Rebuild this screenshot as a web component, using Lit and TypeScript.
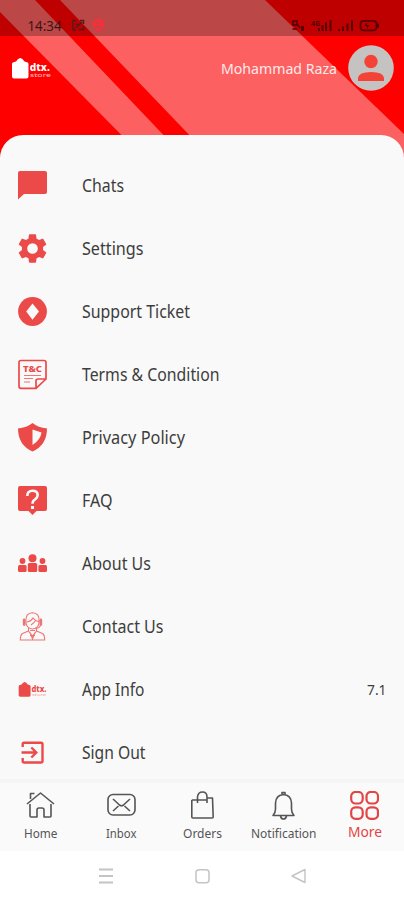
import { LitElement, html, css, svg } from "lit";
import { customElement, property } from "lit/decorators.js";

const bag = svg`<path d="M0 6Q0 4.500 1.500 4.200L4 3.500Q6 0 8.300 0Q10.500 0 12.500 3.500L15 4.200Q16.500 4.500 16.500 6V18.500Q16.500 20.500 14.500 20.500H2Q0 20.500 0 18.500Z"/>`;

const icons: Record<string, unknown> = {
  chat: svg`<path d="M2 0H27Q29 0 29 2V21Q29 23 27 23H6L0 28.5V2Q0 0 2 0Z"/>`,
  settings: svg`<g transform="translate(-3.2 -3.2) scale(1.475)"><path d="M19.14 12.94c.04-.3.06-.61.06-.94s-.02-.64-.07-.94l2.03-1.58a.49.49 0 0 0 .12-.61l-1.92-3.32a.49.49 0 0 0-.59-.22l-2.39.96a7 7 0 0 0-1.62-.94l-.36-2.54A.48.48 0 0 0 13.920 2.400h-3.840a.48.48 0 0 0-.48.41l-.36 2.540c-.59.24-1.130.570-1.620.940l-2.390-.960a.48.48 0 0 0-.59.220L2.740 8.870a.48.48 0 0 0 .12.610l2.030 1.580a6 6 0 0 0 0 1.880l-2.030 1.580a.49.49 0 0 0-.12.610l1.920 3.320c.12.220.370.290.590.220l2.390-.960c.5.380 1.030.700 1.620.940l.36 2.540c.05.240.240.410.480.410h3.840c.24 0 .440-.170.470-.410l.36-2.540c.59-.240 1.130-.560 1.620-.940l2.390.960c.22.080.470 0 .590-.220l1.920-3.320a.48.48 0 0 0-.12-.610ZM12 15.600a3.600 3.600 0 1 1 0-7.200 3.600 3.600 0 0 1 0 7.200Z"/></g>`,
  ticket: svg`<circle cx="14.500" cy="14.500" r="14.400"/><path fill="#f9f9f9" d="M14.500 6.500L21 14.500L14.500 22.800L8.200 14.500Z"/>`,
  terms: svg`<path fill="none" stroke="currentColor" stroke-width="1.700" d="M3 .5H26Q28 .5 28 2.500V19L18 28.300H3Q1 28.300 1 26.300V2.500Q1 .5 3 .5ZM18 28V21Q18 19 20 19H28"/><text x="5" y="12" font-size="9" font-weight="800" textLength="19" lengthAdjust="spacingAndGlyphs">T&amp;C</text><path fill="none" stroke="currentColor" stroke-width="1.200" opacity=".75" d="M6 15.500H23M6 18.500H15M6 22H12"/>`,
  privacy: svg`<path d="M14.500 0Q20 4.500 29 5.500Q29 22 14.500 28.500Q0 22 0 5.500Q9 4.500 14.500 0Z"/><path fill="#f9f9f9" d="M14.500 6.500L23.500 9.500Q22.500 17 14.500 22Z"/>`,
  faq: svg`<path d="M2 0H27Q29 0 29 2V23Q29 25 27 25H18.500L14.500 29L10.500 25H2Q0 25 0 23V2Q0 0 2 0Z"/><path fill="none" stroke="#f9f9f9" stroke-width="2.600" d="M9.300 10Q9.300 4.700 14.500 4.700Q19.700 4.700 19.700 9Q19.700 11.500 17 13.500Q14.500 15 14.500 17.700"/><path fill="#f9f9f9" d="M13 20H16V23H13Z"/>`,
  about: svg`<circle cx="14.500" cy="9.300" r="4"/><circle cx="4.500" cy="12" r="2.900"/><circle cx="24.500" cy="12" r="2.900"/><rect x="9.800" y="14" width="9.400" height="9" rx="1.500"/><rect x="0" y="16" width="8.600" height="7" rx="1.500"/><rect x="20.400" y="16" width="8.600" height="7" rx="1.500"/>`,
  contact: svg`<g fill="none" stroke="currentColor" stroke-width="1.100" opacity=".75"><path d="M8 9Q7.500 1 14.500 .7Q21.500 1 21 9V11Q20 16.500 14.500 17Q9 16.500 8 11ZM9 10Q13 9.500 15 6Q17 9 20.500 9.500M13 13Q16 11 18 8M10.500 16V19L14.500 24L18.500 19V16M10.500 19L4.500 21.500Q2.300 23 2.300 28H26.700Q26.700 23 24.500 21.500L18.500 19M12 20.500L14.500 27L17 20.500M12 23.500H17M12 18.500H17"/><path stroke-width="2.800" stroke-linecap="round" d="M6.200 8V12.500M22.800 8V12.500"/><path d="M22.500 13.500Q21 16.500 17 16.500"/></g>`,
  info: svg`<g transform="translate(.7 7) scale(.72)">${bag}</g><text x="13.500" y="16.600" font-size="8" font-weight="800" textLength="15" lengthAdjust="spacingAndGlyphs">dtx.</text><text x="14" y="20.800" font-size="3.500" opacity=".6" textLength="14" lengthAdjust="spacingAndGlyphs">store</text>`,
  exit: svg`<path fill="none" stroke="currentColor" stroke-width="2.400" d="M4.700 9V6Q4.700 4.700 6 4.700H23Q24.500 4.700 24.500 6V23Q24.500 24.500 23 24.500H6Q4.700 24.500 4.700 23V20M3.500 14.500H18M13.300 9.500L18.300 14.500L13.300 19.500"/>`,
};

const tabIcons: Record<string, unknown> = {
  home: svg`<path d="M1 13L14.500 2L28 13M4 13V25Q4 26 5 26H11V19Q11 17 13 17H16Q18 17 18 19V26H24Q25 26 25 25V13M4.500 8V2.500H8.500"/>`,
  inbox: svg`<rect x="1" y="3.500" width="27" height="20.500" rx="5"/><path d="M6 8L12.500 14Q14.500 15.500 16.500 14L23 8M6 20L11.500 15M23 20L17.500 15"/>`,
  orders: svg`<path d="M3.800 9V26Q3.800 27 5 27H24Q25.200 27 25.200 26L24.500 7H19M3.800 9H19M9.500 12V6Q10 1 14.500 1Q19 1 19 6V12"/>`,
  bell: svg`<path d="M4 24.500Q6.500 22 6.500 18V12Q7 4 14.500 3.500Q22 4 22.500 12V18Q22.500 22 25 24.500ZM13 3.500V1.500H16V3.500M11.500 25Q12 28 14.500 28Q17 28 17.500 25"/>`,
  more: svg`<g stroke-width="2.200"><rect x="1.200" y="1" width="11.500" height="11.500" rx="4.200"/><rect x="16.500" y="1" width="11.500" height="11.500" rx="4.200"/><rect x="1.200" y="16.300" width="11.500" height="11.500" rx="4.200"/><rect x="16.500" y="16.300" width="11.500" height="11.500" rx="4.200"/></g>`,
};

/** One line of text set to a fixed measure. */
@customElement("fit-text")
export class FitText extends LitElement {
  @property() text = "";
  @property({ type: Number }) measure = 0;
  @property({ type: Number }) size = 17;
  static styles = css`
    :host { display: block; }
    svg { display: block; overflow: visible; fill: currentColor; font-family: "Noto Sans", sans-serif; }
  `;
  render() {
    return html`<svg width=${this.measure} height="24"><text x="0" y="18" font-size=${this.size} textLength=${this.measure} lengthAdjust="spacingAndGlyphs">${this.text}</text></svg>`;
  }
}

const rows: [string, string, number][] = [
  ["chat", "Chats", 42],
  ["settings", "Settings", 61.5],
  ["ticket", "Support Ticket", 108],
  ["terms", "Terms & Condition", 137.5],
  ["privacy", "Privacy Policy", 103],
  ["faq", "FAQ", 30.5],
  ["about", "About Us", 69],
  ["contact", "Contact Us", 81.5],
  ["info", "App Info", 62.5],
  ["exit", "Sign Out", 63.5],
];

const tabs: [string, string, number][] = [
  ["home", "Home", 33.5],
  ["inbox", "Inbox", 30.5],
  ["orders", "Orders", 39],
  ["bell", "Notification", 65.5],
  ["more", "More", 34],
];

@customElement("app-root")
export class AppRoot extends LitElement {
  static styles = css`
    :host { display: block; width: 404px; height: 900px; overflow: hidden; background: #fff; font-family: "Noto Sans", sans-serif; }
    .screen { display: flex; flex-direction: column; height: 900px; position: relative; }
    .stripes { position: absolute; top: 0; left: 0; }
    .status { position: relative; height: 36px; background: rgba(0, 0, 0, 0.255); flex: none; }
    .status svg { display: block; font-family: "Noto Sans", sans-serif; }
    .header { position: relative; height: 99px; flex: none; display: flex; padding: 9px 10px 0 12px; box-sizing: border-box; align-items: flex-start; color: #fff; }
    .logo { margin-top: 12.5px; fill: #fff; font-family: "Noto Sans", sans-serif; }
    .name { margin: 11px 11px 0 auto; color: #ffe9e9; }
    .sheet { position: relative; flex: 1; min-height: 0; background: #f9f9f9; border-radius: 23px 23px 0 0; padding-top: 19px; box-sizing: border-box; }
    .row { height: 63px; display: flex; align-items: center; padding: 0 18px; color: #3d3d3d; }
    .icon { color: #eb4a49; fill: currentColor; width: 29px; height: 29px; margin-right: 35px; overflow: visible; font-family: "Noto Sans", sans-serif; }
    .version { margin-left: auto; margin-top: -1px; }
    .tabs { position: relative; height: 72px; flex: none; background: #fafafa; display: grid; grid-template-columns: repeat(5, 81px); box-sizing: border-box; border-top: 4px solid #f5f5f5; padding-top: 8px; }
    .tab { display: flex; flex-direction: column; align-items: center; color: #555; }
    .tab svg { fill: none; stroke: currentColor; stroke-width: 1.6; stroke-linejoin: round; }
    .active { color: #e34545; }
    .active fit-text { margin-top: -1px; }
    .system { position: relative; height: 49px; flex: none; background: #fff; }
    .system svg { display: block; fill: none; stroke: #c4c4c4; }
  `;
  render() {
    return html`<div class="screen">
      <svg class="stripes" width="404" height="165">
        <path fill="#f00" d="M0 0H404V165H0Z" />
        <path fill="#fc6060" d="M0 0H35L192 165H151L0 12ZM60 0H265L404 134V165H218Z" />
      </svg>
      <div class="status">
        <svg width="404" height="36" fill="#3b1515">
          <text x="27.500" y="30.500" font-size="14.500" textLength="34" lengthAdjust="spacingAndGlyphs">14:34</text>
          <g fill="none" stroke="#54191c" stroke-width="1.500">
            <path d="M76 20.500H73V30H76M80 20.500H83.500V24M75.500 28L82 22M75.500 23.500L79 26M79 29.500H83.500V26.500" />
          </g>
          <path fill="none" stroke="#f0323c" stroke-width="3" stroke-linecap="round" d="M93 24Q96 19 101 20.500Q104.500 23 99 24.500L94 25.500M103 25Q102 30 96 30" />
          <g fill="#560000">
            <path fill="none" stroke="#560000" stroke-width="1.500" d="M293 21H297V25H293ZM292.500 29H297M298 25L300 28" />
            <path d="M301 26H304V31H301ZM318 28H320V31H318ZM321.500 25H323.500V31H321.500ZM325 22.500H327V31H325ZM329.500 20H331.500V31H329.500ZM338 29H340V31H338ZM342 26.500H344V31H342ZM346.500 23.500H348.500V31H346.500ZM351 20H353V31H351Z" />
            <text x="311" y="25.500" font-size="7" font-weight="700">4G</text>
            <rect x="360.500" y="20.800" width="16" height="9.500" rx="3" fill="none" stroke="#560000" stroke-width="1.700" />
            <path d="M377 23.500H379V27.500H377ZM367 22.500L364.500 26H367V29L369.500 25H367Z" />
          </g>
        </svg>
      </div>
      <div class="header">
        <svg class="logo" width="40" height="22">${bag}
          <text x="17.800" y="12.500" font-size="11" font-weight="800" textLength="20" lengthAdjust="spacingAndGlyphs">dtx.</text>
          <text x="18" y="19" font-size="5" opacity=".75" textLength="21" lengthAdjust="spacingAndGlyphs">store</text>
        </svg>
        <fit-text class="name" text="Mohammad Raza" .measure=${116} .size=${14.8}></fit-text>
        <svg width="46" height="46"><circle cx="23" cy="23" r="22.800" fill="#c5c3c1" /><circle cx="23" cy="16.500" r="6.700" fill="#f44336" /><path fill="#f44336" d="M10 36V33Q10.500 27 23 27Q35.500 27 36 33V36Z" /></svg>
      </div>
      <div class="sheet">
        ${rows.map(([icon, label, width]) => html`<div class="row">
          <svg class="icon" viewBox="0 0 29 29">${icons[icon]}</svg>
          <fit-text .text=${label} .measure=${width} .size=${17.5}></fit-text>
          ${icon === "info" ? html`<fit-text class="version" text="7.1" .measure=${19.5} .size=${14.5}></fit-text>` : ""}
        </div>`)}
      </div>
      <div class="tabs">
        ${tabs.map(([icon, label, width]) => html`<div class="tab ${icon === "more" ? "active" : ""}">
          <svg width="29" height="29">${tabIcons[icon]}</svg>
          <fit-text .text=${label} .measure=${width} .size=${icon === "more" ? 14 : 11.8}></fit-text>
        </div>`)}
      </div>
      <div class="system">
        <svg width="404" height="49"><path stroke-width="1.800" d="M99 18.500H113M99 25H113M99 31.500H113" /><rect x="196" y="18.700" width="13" height="13" rx="3" stroke-width="1.500" /><path stroke-width="1.400" stroke-linejoin="round" d="M292 25L305 18.500V31.500Z" /></svg>
      </div>
    </div>`;
  }
}
